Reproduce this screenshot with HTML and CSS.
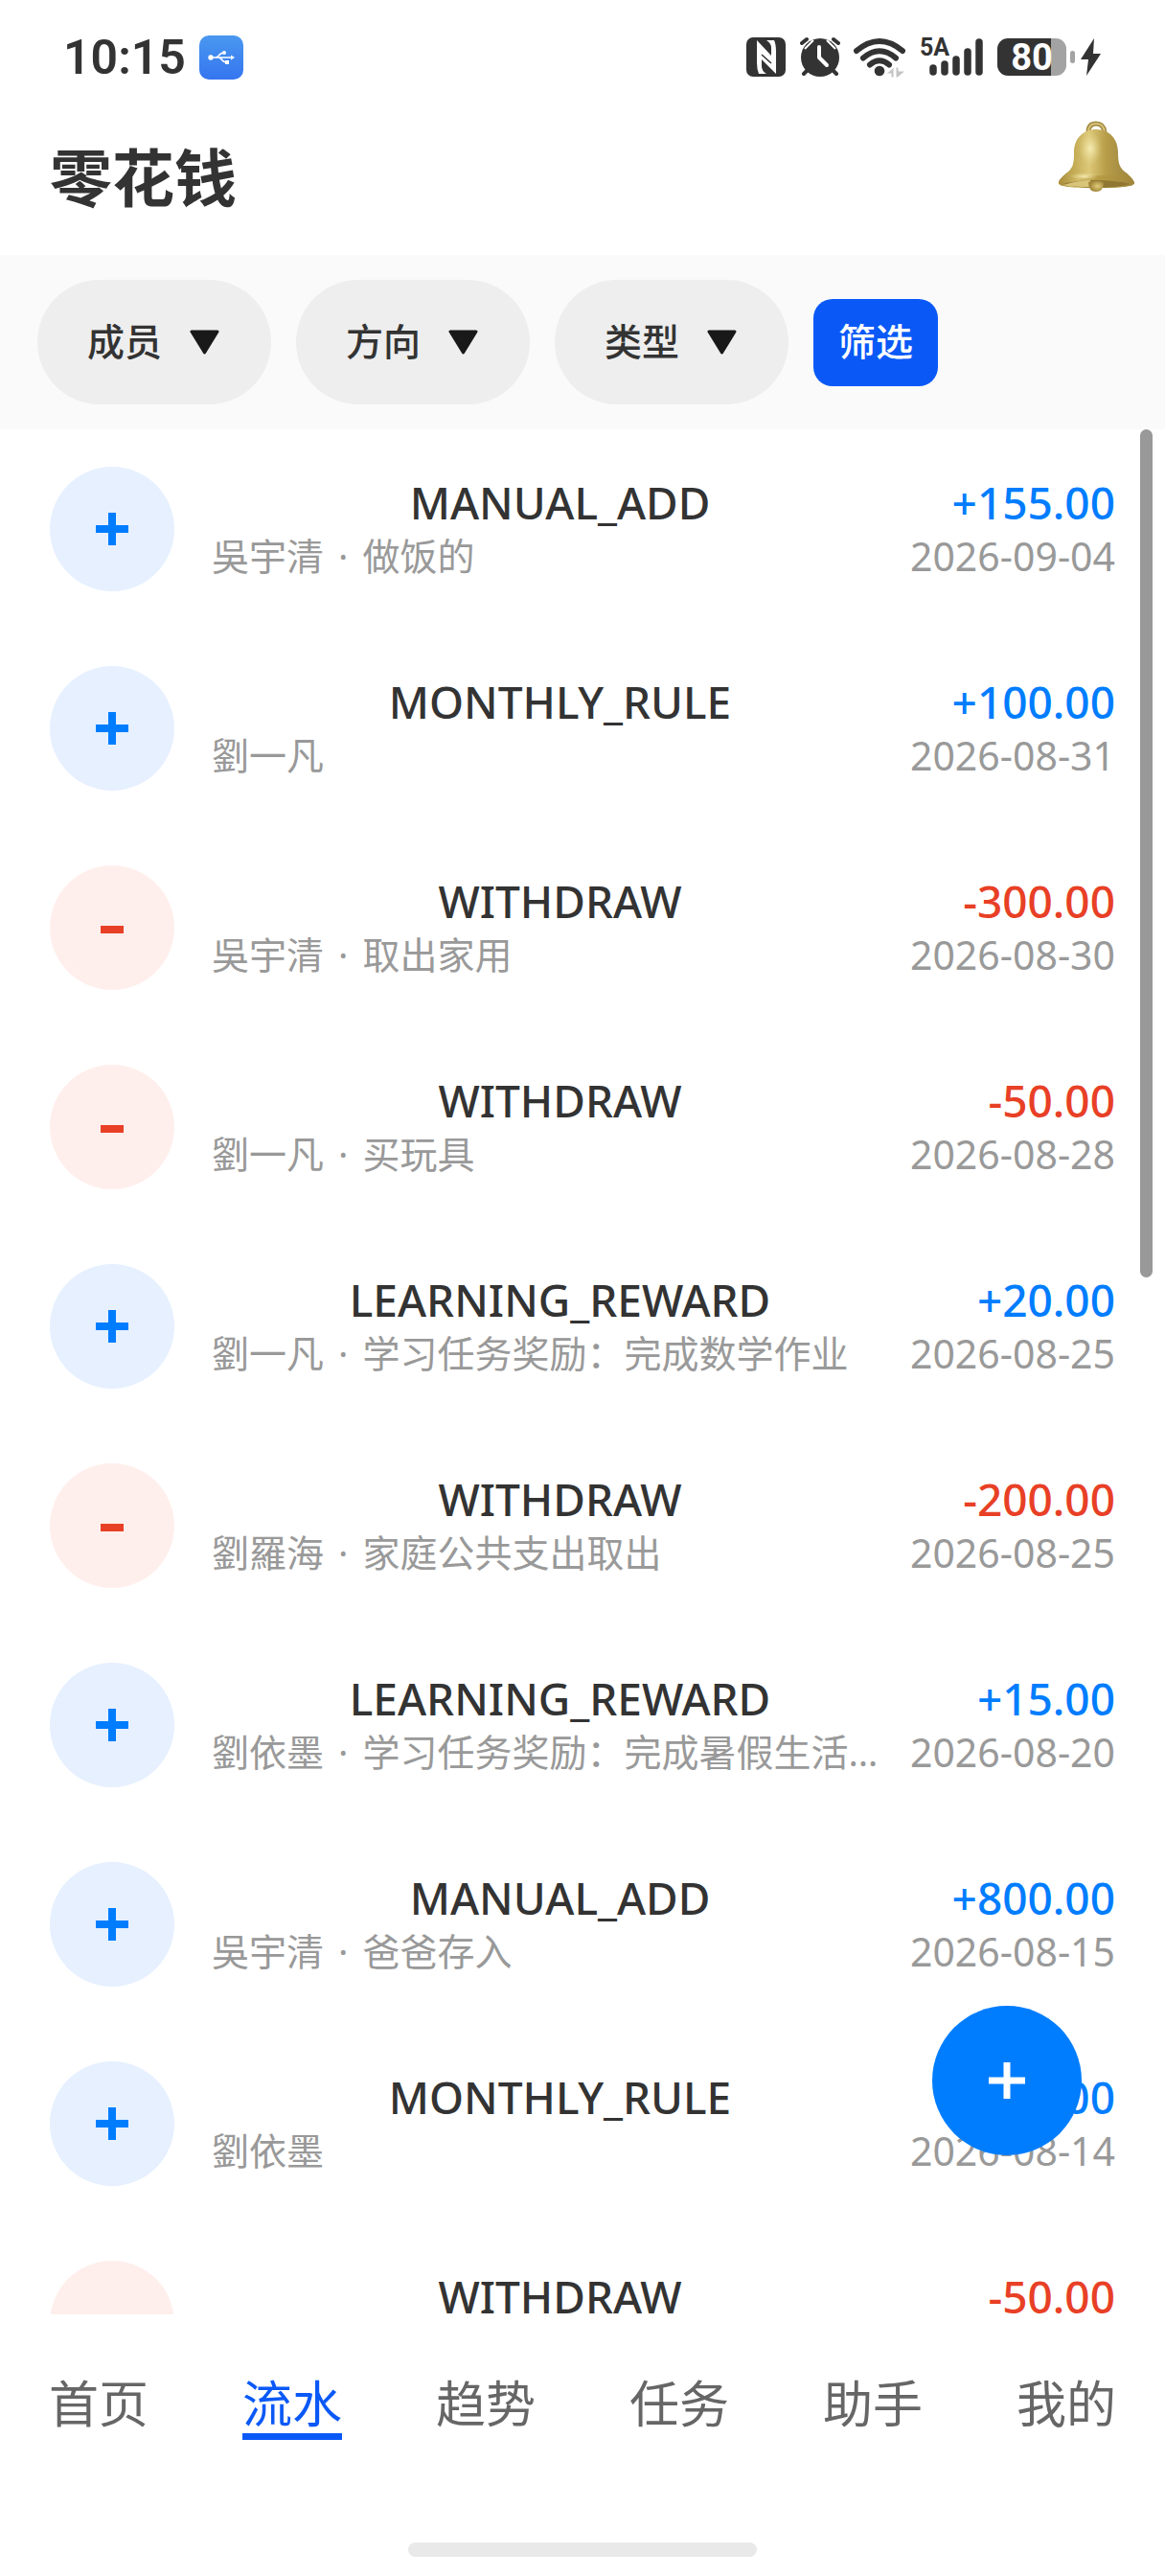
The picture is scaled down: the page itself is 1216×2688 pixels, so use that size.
FILE: index.html
```html
<!DOCTYPE html>
<html lang="zh-CN">
<head>
<meta charset="utf-8">
<meta name="viewport" content="width=device-width, initial-scale=1">
<title>零花钱</title>
<link rel="stylesheet" href="styles.css">
</head>
<body>
<div class="status">
  <div class="status-left">
    <span class="time">10:15</span>
    <svg class="usb" width="46" height="46" viewBox="0 0 46 46" role="img" aria-label="USB">
      <defs><linearGradient id="usbBg" x1="0" y1="0" x2="0" y2="1"><stop offset="0" stop-color="#4a98f0"/><stop offset="1" stop-color="#3575f0"/></linearGradient></defs>
      <rect width="46" height="46" rx="10" fill="url(#usbBg)"/>
      <g fill="none" stroke="#fff" stroke-width="1.6"><path d="M12 23H35M17 23c4 0 3-5 9-5M20 23c4 0 3 5 8 5"/></g>
      <g fill="#fff"><circle cx="12" cy="23" r="2.7"/><circle cx="26" cy="18" r="2"/><rect x="27" y="26" width="4" height="4"/><path d="M33 20.500l4 2.500-4 2.500z"/></g>
    </svg>
  </div>
  <div class="status-right">
    <svg width="42" height="44" viewBox="0 0 42 44" role="img" aria-label="NFC">
      <rect y="1" width="41" height="41" rx="7" fill="#333"/>
      <path d="M11 4L26 20V12Q26 7 21 4H29Q31 8 31 16V39L16 24V31Q16 36 21 39H13Q11 34 11 27z" fill="#fff"/>
      <path d="M16 19L26 28" stroke="#333" stroke-width="1.500"/>
    </svg>
    <svg width="42" height="44" viewBox="0 0 42 44" role="img" aria-label="闹钟">
      <circle cx="21" cy="22" r="20" fill="#333"/>
      <path d="M5 13L14 4M37 13L28 4" stroke="#fff" stroke-width="2"/>
      <g stroke="#333" stroke-width="4" stroke-linecap="round"><path d="M2 7L7 3M40 7L35 3M8 35L4 39M34 35L38 39"/></g>
      <path d="M20 11V22L28 30" fill="none" stroke="#fff" stroke-width="4" stroke-linecap="round" stroke-linejoin="round"/>
    </svg>
    <svg width="54" height="44" viewBox="0 0 54 44" role="img" aria-label="无线网络">
      <g fill="none" stroke="#333" stroke-width="6" stroke-linecap="round"><path d="M3 15Q27-5 51 15M10 22.500Q27 8 44 22.500M17 29.500Q27 21 37 29.500"/></g>
      <circle cx="27" cy="36" r="5.300" fill="#333"/>
      <path d="M34 39L42 32V43H39V39zM44 32H47V36H54L46 43H44z" fill="#c4c4c4" stroke="#fff" stroke-width="1"/>
    </svg>
    <svg class="signal" width="68" height="44" viewBox="0 0 68 44" role="img" aria-label="5A 信号">
      <text class="net" x="1" y="20">5A</text>
      <g stroke="#333" stroke-width="7.500" stroke-linecap="round"><path d="M15 33V37M27 29V37M39 24V37M51 16V37M63 6V37"/></g>
    </svg>
    <svg width="109" height="44" viewBox="0 0 109 44" role="img" aria-label="电量 80">
      <defs><clipPath id="cell"><rect y="2" width="72" height="39" rx="11"/></clipPath></defs>
      <g clip-path="url(#cell)"><rect width="56" height="44" fill="#333"/><rect x="56" width="20" height="44" fill="#a3a3a3"/></g>
      <rect x="76" y="15" width="5" height="13" rx="2.500" fill="#a3a3a3"/>
      <text class="level" x="36" y="35">80</text>
      <path d="M101 2L87 24H95L93 41L108 18H100z" fill="#333"/>
    </svg>
  </div>
</div>

<header class="head">
  <h1>零花钱</h1>
  <button class="bell" type="button" aria-label="通知">
    <svg width="79" height="75" viewBox="0 0 79 75" aria-hidden="true">
      <defs>
        <linearGradient id="body" x1="0" y1="0" x2="1" y2="0"><stop offset="0" stop-color="#a38a3c"/><stop offset=".2" stop-color="#c4ab55"/><stop offset=".4" stop-color="#dcc878"/><stop offset=".62" stop-color="#b89e4a"/><stop offset="1" stop-color="#96803c"/></linearGradient>
        <linearGradient id="rim" x1="0" y1="0" x2="1" y2="0"><stop offset="0" stop-color="#a88c3a"/><stop offset=".25" stop-color="#d0ba66"/><stop offset=".5" stop-color="#b89d45"/><stop offset=".8" stop-color="#ab9040"/><stop offset="1" stop-color="#a1863a"/></linearGradient>
        <radialGradient id="shine"><stop offset="0" stop-color="#f5ecb4"/><stop offset="1" stop-color="#e6d58a" stop-opacity="0"/></radialGradient>
        <radialGradient id="clap" cx=".6" cy=".5"><stop offset="0" stop-color="#e2cd7c"/><stop offset="1" stop-color="#a2873a"/></radialGradient>
      </defs>
      <path d="M31 12Q31 3 39 3T48 12" fill="none" stroke="#a89045" stroke-width="5"/>
      <path d="M31 12Q31 3 39 3T48 12" fill="none" stroke="#ddca83" stroke-width="1.500"/>
      <path d="M39 9C54 9 62 20 62 33C62 46 64 49 70 54C75 58 79 63 79 65C79 69 60 70 39 70S0 69 0 65C0 62 4 58 9 54C15 49 16 45 16 33C16 18 26 9 39 9Z" fill="url(#body)"/>
      <path d="M9 54C18 58 60 58 70 54C75 58 79 63 79 65C79 69 60 70 39 70S0 69 0 65C0 62 4 58 9 54Z" fill="url(#rim)"/>
      <path d="M4 66Q39 58 75 66Q60 70 39 70T4 66Z" fill="#8f7632"/>
      <path d="M5 67Q22 62 33 62V69Q14 69 5 67Z" fill="#d8c57a"/>
      <ellipse cx="33" cy="29" rx="12" ry="18" fill="url(#shine)"/>
      <ellipse cx="27" cy="58" rx="15" ry="4" fill="url(#shine)"/>
      <path d="M31 64Q39 61 47 64Q47 74 39 74T31 64Z" fill="url(#clap)"/>
    </svg>
  </button>
</header>

<form class="filters">
  <label class="pill"><select aria-label="成员"><option>成员</option></select><svg width="31" height="26" viewBox="0 0 31 26" aria-hidden="true"><path d="M2 2H29L15.500 24Z"/></svg></label>
  <label class="pill"><select aria-label="方向"><option>方向</option></select><svg width="31" height="26" viewBox="0 0 31 26" aria-hidden="true"><path d="M2 2H29L15.500 24Z"/></svg></label>
  <label class="pill"><select aria-label="类型"><option>类型</option></select><svg width="31" height="26" viewBox="0 0 31 26" aria-hidden="true"><path d="M2 2H29L15.500 24Z"/></svg></label>
  <button class="apply" type="button">筛选</button>
</form>

<main class="main">
  <ul class="list" id="list">
    <li class="row in"><span class="badge"><svg viewBox="0 0 34 34" role="img" aria-label="收入"><path d="M0 17H34M17 0V34"/></svg></span><div class="info"><p class="kind">MANUAL_ADD</p><p class="note">吳宇清<i>·</i>做饭的</p></div><div class="sum"><p class="amount">+155.00</p><time>2026-09-04</time></div></li>
    <li class="row in"><span class="badge"><svg viewBox="0 0 34 34" role="img" aria-label="收入"><path d="M0 17H34M17 0V34"/></svg></span><div class="info"><p class="kind">MONTHLY_RULE</p><p class="note">劉一凡</p></div><div class="sum"><p class="amount">+100.00</p><time>2026-08-31</time></div></li>
    <li class="row out"><span class="badge"><svg viewBox="0 0 34 34" role="img" aria-label="支出"><path d="M5 19H29"/></svg></span><div class="info"><p class="kind">WITHDRAW</p><p class="note">吳宇清<i>·</i>取出家用</p></div><div class="sum"><p class="amount">-300.00</p><time>2026-08-30</time></div></li>
    <li class="row out"><span class="badge"><svg viewBox="0 0 34 34" role="img" aria-label="支出"><path d="M5 19H29"/></svg></span><div class="info"><p class="kind">WITHDRAW</p><p class="note">劉一凡<i>·</i>买玩具</p></div><div class="sum"><p class="amount">-50.00</p><time>2026-08-28</time></div></li>
    <li class="row in"><span class="badge"><svg viewBox="0 0 34 34" role="img" aria-label="收入"><path d="M0 17H34M17 0V34"/></svg></span><div class="info"><p class="kind">LEARNING_REWARD</p><p class="note">劉一凡<i>·</i>学习任务奖励：完成数学作业</p></div><div class="sum"><p class="amount">+20.00</p><time>2026-08-25</time></div></li>
    <li class="row out"><span class="badge"><svg viewBox="0 0 34 34" role="img" aria-label="支出"><path d="M5 19H29"/></svg></span><div class="info"><p class="kind">WITHDRAW</p><p class="note">劉羅海<i>·</i>家庭公共支出取出</p></div><div class="sum"><p class="amount">-200.00</p><time>2026-08-25</time></div></li>
    <li class="row in"><span class="badge"><svg viewBox="0 0 34 34" role="img" aria-label="收入"><path d="M0 17H34M17 0V34"/></svg></span><div class="info"><p class="kind">LEARNING_REWARD</p><p class="note">劉依墨<i>·</i>学习任务奖励：完成暑假生活…</p></div><div class="sum"><p class="amount">+15.00</p><time>2026-08-20</time></div></li>
    <li class="row in"><span class="badge"><svg viewBox="0 0 34 34" role="img" aria-label="收入"><path d="M0 17H34M17 0V34"/></svg></span><div class="info"><p class="kind">MANUAL_ADD</p><p class="note">吳宇清<i>·</i>爸爸存入</p></div><div class="sum"><p class="amount">+800.00</p><time>2026-08-15</time></div></li>
    <li class="row in"><span class="badge"><svg viewBox="0 0 34 34" role="img" aria-label="收入"><path d="M0 17H34M17 0V34"/></svg></span><div class="info"><p class="kind">MONTHLY_RULE</p><p class="note">劉依墨</p></div><div class="sum"><p class="amount">+50.00</p><time>2026-08-14</time></div></li>
    <li class="row out"><span class="badge"><svg viewBox="0 0 34 34" role="img" aria-label="支出"><path d="M5 19H29"/></svg></span><div class="info"><p class="kind">WITHDRAW</p></div><div class="sum"><p class="amount">-50.00</p></div></li>
  </ul>
  <span class="thumb"></span>
  <button class="fab" type="button" aria-label="新增"><svg width="38" height="38" viewBox="0 0 38 38" aria-hidden="true"><path d="M0 19H38M19 0V38"/></svg></button>
</main>

<nav class="tabs">
  <a href="#home">首页</a>
  <a href="#list" class="current" aria-current="page">流水</a>
  <a href="#trend">趋势</a>
  <a href="#tasks">任务</a>
  <a href="#helper">助手</a>
  <a href="#me">我的</a>
</nav>
<div class="gesture"><span></span></div>
</body>
</html>
```
FILE: styles.css
```css
* { box-sizing: border-box; }

body {
  margin: 0;
  height: 100vh;
  display: flex;
  flex-direction: column;
  background: #fff;
  color: #333;
  font-family: "Noto Sans", "Noto Sans CJK SC", sans-serif;
}

p, h1, ul { margin: 0; padding: 0; }
button, select { font: inherit; border: 0; padding: 0; cursor: pointer; }
svg { display: block; }

/* system status bar */
.status {
  display: flex;
  justify-content: space-between;
  align-items: center;
  height: 120px;
  padding: 0 66px;
}
.status-left { display: flex; align-items: center; gap: 14px; }
.time { font: 600 50px/60px Roboto, sans-serif; }
.status-right { display: flex; gap: 14px; }
.signal { overflow: visible; }
.net { font: 700 25px Roboto, sans-serif; fill: #333; }
.level { font: 700 38px Roboto, sans-serif; fill: #fff; text-anchor: middle; }

/* page header */
.head {
  display: flex;
  justify-content: space-between;
  align-items: flex-start;
  height: 146px;
  padding: 6px 32px 0 52px;
}
.head h1 {
  font-size: 65px;
  line-height: 118px;
  font-weight: 700;
}
.bell { background: none; }

/* filter bar */
.filters {
  display: flex;
  align-items: center;
  gap: 26px;
  padding: 26px 39px;
  background: #fafafa;
  font-size: 39px;
  line-height: 52px;
  font-weight: 500;
}
.pill {
  display: grid;
  align-items: center;
  border-radius: 65px;
  background: #eee;
}
.pill > * { grid-area: 1 / 1; }
.pill select {
  appearance: none;
  height: 130px;
  padding: 0 113px 2px 52px;
  border-radius: 65px;
  background: transparent;
  color: #333;
}
.pill svg {
  justify-self: end;
  margin-right: 54px;
  fill: #191919;
  stroke: #191919;
  stroke-width: 3;
  stroke-linejoin: round;
  pointer-events: none;
}
.apply {
  padding: 18px 26px 21px;
  border-radius: 20px;
  background: #0a59f7;
  color: #fff;
}

/* transactions */
.main { position: relative; flex: 1; min-height: 0; }
.list {
  height: 100%;
  overflow-y: auto;
  scrollbar-width: none;
  list-style: none;
}
.row {
  display: flex;
  align-items: center;
  height: 208px;
  padding: 0 52px;
}
.badge {
  flex: none;
  display: grid;
  place-items: center;
  width: 130px;
  height: 130px;
  border-radius: 50%;
}
.badge svg { width: 34px; height: 34px; fill: none; stroke: currentColor; stroke-width: 8; }
.in .badge { background: #e6f0ff; color: #007dff; }
.out .badge { background: #ffefec; color: #e84026; }
.info {
  flex: 1;
  min-width: 0;
  margin-left: 39px;
  height: 114px;
}
.kind, .amount { font-size: 46px; line-height: 58px; font-weight: 500; }
.kind { text-align: center; }
.note {
  overflow: hidden;
  font-size: 39px;
  line-height: 54px;
  color: #999;
  white-space: nowrap;
}
.note i { padding: 0 15px; font-style: normal; }
.sum {
  flex: none;
  min-width: 216px;
  height: 114px;
  text-align: right;
}
.in .amount { color: #007dff; }
.out .amount { color: #e84026; }
.sum time { display: block; font-size: 41px; line-height: 54px; color: #999; }

.thumb {
  position: absolute;
  top: 0;
  right: 13px;
  width: 13px;
  height: 45%;
  border-radius: 7px;
  background: #999;
}
.fab {
  position: absolute;
  right: 87px;
  bottom: 166px;
  display: grid;
  place-items: center;
  width: 156px;
  height: 156px;
  border-radius: 50%;
  background: #007dff;
}
.fab svg { stroke: #fff; stroke-width: 7; }

/* bottom navigation */
.tabs {
  display: flex;
  justify-content: space-between;
  padding: 62px 51px 0;
}
.tabs a {
  border-bottom: 7px solid transparent;
  font-size: 52px;
  line-height: 62px;
  color: #666;
  text-decoration: none;
}
.tabs .current { border-color: #0a59f7; color: #0a59f7; }
.gesture {
  display: flex;
  justify-content: center;
  padding: 107px 0 20px;
}
.gesture span { width: 30%; height: 15px; border-radius: 8px; background: #e9e9e9; }
```
